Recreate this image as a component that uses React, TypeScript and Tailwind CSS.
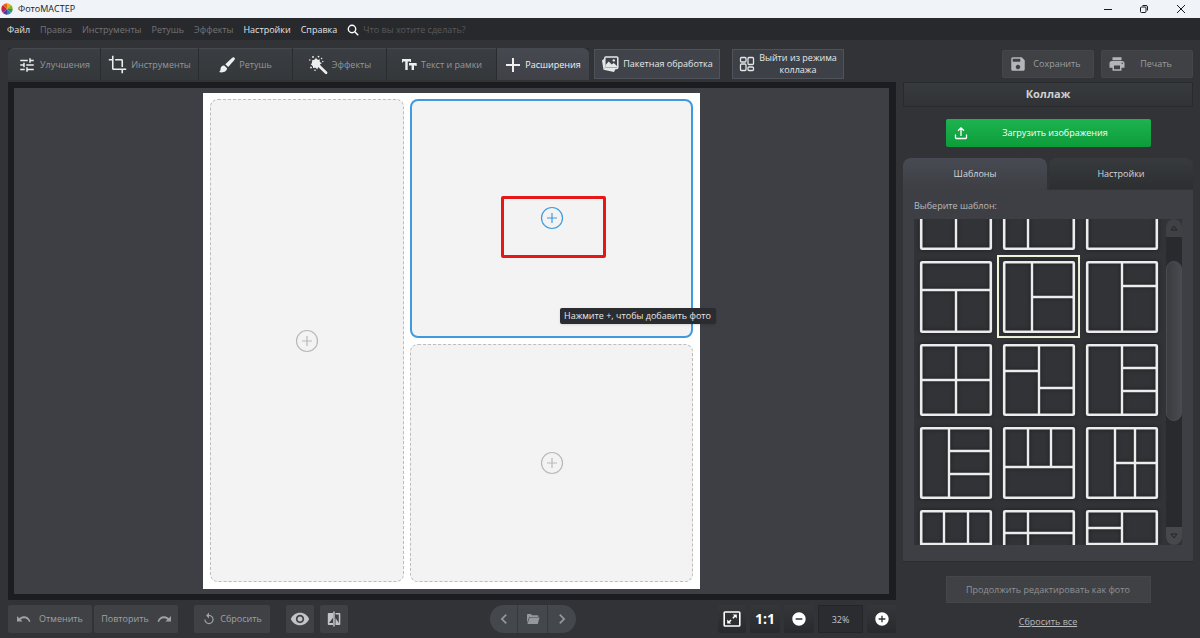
import { useState } from "react";
import type { ReactNode } from "react";
import clsx from "clsx";
import {
  MdTune,
  MdCrop,
  MdSave,
  MdPrint,
  MdReplay,
  MdRemoveRedEye,
  MdChevronLeft,
  MdChevronRight,
  MdAddCircle,
  MdRemoveCircle,
} from "react-icons/md";

// [x1, y1, x2, y2] dividers inside a 72x72 frame
type Line = [number, number, number, number];

interface Template {
  id: string;
  lines: Line[];
}

const TEMPLATES: Template[] = [
  { id: "2-columns", lines: [[36, 0, 36, 72]] },
  { id: "narrow-wide", lines: [[25, 0, 25, 72]] },
  { id: "single", lines: [] },
  { id: "top-2-bottom", lines: [[0, 29, 72, 29], [36, 29, 36, 72]] },
  { id: "left-2-right", lines: [[29, 0, 29, 72], [29, 36, 72, 36]] },
  { id: "left-2-right-short", lines: [[36, 0, 36, 72], [36, 25, 72, 25]] },
  { id: "4-grid", lines: [[36, 0, 36, 72], [0, 36, 72, 36]] },
  { id: "4-shifted", lines: [[36, 0, 36, 72], [0, 27, 36, 27], [36, 44, 72, 44]] },
  { id: "half-3-right", lines: [[36, 0, 36, 72], [36, 24, 72, 24], [36, 47, 72, 47]] },
  { id: "left-3-right", lines: [[29, 0, 29, 72], [29, 24, 72, 24], [29, 47, 72, 47]] },
  { id: "3-top-bottom", lines: [[0, 40, 72, 40], [25, 0, 25, 40], [48, 0, 48, 40]] },
  { id: "left-4-right", lines: [[29, 0, 29, 72], [49, 0, 49, 72], [29, 36, 72, 36]] },
  { id: "6-grid", lines: [[24, 0, 24, 72], [48, 0, 48, 72], [0, 34, 72, 34]] },
  { id: "5-mixed", lines: [[25, 0, 25, 72], [0, 23, 72, 23]] },
  { id: "5-steps", lines: [[36, 0, 36, 34], [0, 18, 36, 18], [0, 34, 72, 34]] },
];

const MENU = [
  { label: "Файл", enabled: true },
  { label: "Правка", enabled: false },
  { label: "Инструменты", enabled: false },
  { label: "Ретушь", enabled: false },
  { label: "Эффекты", enabled: false },
  { label: "Настройки", enabled: true },
  { label: "Справка", enabled: true },
];

const LOGO_COLORS = ["#e8b21c", "#7fb52c", "#2a9a52", "#2c7fc0", "#4b3f9b", "#a32b7c", "#d3222f", "#e8641e"];

function LogoIcon() {
  return (
    <svg className="size-3" viewBox="-10 -10 20 20">
      {LOGO_COLORS.map((color, i) => (
        <path key={color} d="M0 0L0 -9.5A9.5 9.5 0 0 1 6.72 -6.72Z" fill={color} transform={`rotate(${i * 45})`} />
      ))}
    </svg>
  );
}

function BrushIcon() {
  return (
    <svg className="size-4" viewBox="0 0 16 16" fill="currentColor">
      <path d="M13.200.7Q14.500-.2 15.500.8 16.400 1.900 15.400 3L9.200 10.100 6.300 7.300z" />
      <path d="M5.200 8.500l2.900 2.700c.1 2.800-3.800 5.300-8.100 3.900 1.700-.8 1.300-2.300 1.700-4.100.5-1.800 2-2.900 3.500-2.500z" />
    </svg>
  );
}

function WandIcon() {
  return (
    <svg className="size-5" viewBox="0 0 20 20" fill="currentColor">
      <circle cx="8" cy="8.500" r="4.300" />
      <path d="M8 2.600l1.300 2.600L12 4.200l-.8 2.800 2.800 1.100-2.300 1.500 1.400 2.500-2.900-.2L9.200 14.500 7.400 12.300 4.900 13.200 5.200 10.500 2.600 9.400l2.400-1.600L3.700 5.200l2.900.2z" />
      <path d="M9.500 9.500l8.600 8.300" stroke="currentColor" strokeWidth="2.600" strokeLinecap="round" />
      <g>
        <circle cx="5" cy="2" r=".9" />
        <circle cx="10.500" cy="1.600" r=".9" />
        <circle cx="13.600" cy="3.500" r=".8" />
        <circle cx="1.800" cy="5" r=".8" />
        <circle cx="3" cy="12.500" r=".9" />
        <circle cx="14.800" cy="6.500" r=".7" />
        <circle cx="7" cy="15.200" r=".8" />
      </g>
    </svg>
  );
}

function TextSizeIcon() {
  return (
    <svg className="size-4" viewBox="0 0 16 16" fill="none" stroke="currentColor" strokeWidth="2.400">
      <path d="M1 3.200h9M5.500 3.200V13M8 7.200h7.500M11.800 7.200V13" />
      <path d="M1.500 2.500v3M9.500 2.500v2.500M15 6.500v2.500" strokeWidth="1" />
    </svg>
  );
}

function PlusIcon() {
  return (
    <svg className="size-4" viewBox="0 0 16 16" stroke="currentColor" strokeWidth="2">
      <path d="M8 1v14M1 8h14" />
    </svg>
  );
}

function BatchIcon() {
  return (
    <svg className="size-[18px]" viewBox="0 0 18 18">
      <path d="M1 5.500L3.500 3.500V14H14.500l-1.500 3L2.500 14.800z" fill="currentColor" />
      <rect x="3.800" y="2" width="13" height="11.500" rx="1" fill="none" stroke="currentColor" strokeWidth="1.500" />
      <path d="M4.500 12.500V10l3.200-3.500 3 3 2-1.600 3.300 3v1.600z" fill="currentColor" />
      <circle cx="12.800" cy="5.400" r="1.200" fill="currentColor" />
    </svg>
  );
}

function CollageIcon() {
  return (
    <svg className="size-4" viewBox="0 0 16 16" fill="none" stroke="currentColor" strokeWidth="1.300">
      <rect x="1.500" y="1.500" width="5.500" height="4.500" rx="1" />
      <rect x="9" y="1.500" width="5.500" height="7" rx="1" />
      <rect x="1.500" y="8" width="5.500" height="6.500" rx="1" />
      <rect x="9" y="11" width="5.500" height="3.500" rx="1" />
    </svg>
  );
}

function UploadIcon() {
  return (
    <svg className="size-3.5" viewBox="0 0 14 14" fill="none" stroke="currentColor" strokeWidth="1.300">
      <path d="M1.500 8.500v3.200q0 .8.800.8h9.400q.8 0 .8-.8V8.500M7 10V2M4 4.800L7 1.800l3 3" />
    </svg>
  );
}

function UndoIcon({ flip }: { flip?: boolean }) {
  return (
    <svg className={clsx("w-3.5 h-2.5", flip && "-scale-x-100")} viewBox="0 0 14 10" fill="currentColor">
      <path d="M0 2v5.500h5.600L3.600 5.600C7 3.200 10.500 4.300 12 8l1.500-.5C11.800 2.200 6.500.8 2.200 4.200z" />
    </svg>
  );
}

function CompareIcon() {
  return (
    <svg className="size-4" viewBox="0 0 16 16" fill="currentColor">
      <path d="M2.500 2H7v12H2.500Q1.800 14 1.800 13.300V2.700Q1.800 2 2.500 2zM3 12h4V6.800z" fillRule="evenodd" />
      <path d="M7.200.5h1.500v15H7.200z" />
      <path d="M9.500 2h4q.8 0 .8.800v10.400q0 .8-.8.800h-4v-1.400h3.300V3.400H9.500z" />
      <path d="M9.500 7l3.300 5v1H9.500z" />
    </svg>
  );
}

function FolderIcon() {
  return (
    <svg className="w-3.5 h-3" viewBox="0 0 14 12" fill="currentColor">
      <path d="M1 10V1.800Q1 1 1.800 1h3l1.200 1.300h5.500q.8 0 .8.800V4H3.200z" />
      <path d="M3.600 4.600H13.500L11.800 11H1.400z" />
    </svg>
  );
}

function FitIcon() {
  return (
    <svg className="size-[18px]" viewBox="0 0 18 18" fill="none" stroke="currentColor">
      <rect x="1.200" y="2" width="15.600" height="14" rx=".8" strokeWidth="1.600" />
      <path d="M5.500 12.500l7-7" strokeWidth="1.500" strokeDasharray="3.600 2.500" />
      <path d="M9.800 4.600h4v4zM4.200 9.400v4h4z" fill="currentColor" stroke="none" />
    </svg>
  );
}

function SearchIcon() {
  return (
    <svg className="size-3" viewBox="0 0 12 12" fill="none" stroke="currentColor" strokeWidth="1.400">
      <circle cx="5" cy="5" r="3.700" />
      <path d="M7.800 7.800L11.200 11.200" />
    </svg>
  );
}

function AddCircle() {
  return (
    <svg className="size-6" viewBox="0 0 24 24" fill="none" stroke="currentColor">
      <circle cx="12" cy="12" r="10.500" strokeWidth="1.200" />
      <path d="M12 7v10M7 12h10" strokeWidth="1.200" />
    </svg>
  );
}

function TitleBar() {
  return (
    <header className="flex h-[18px] shrink-0 items-center bg-[#f0f3f8] pl-px text-[#1a1a1a]">
      <LogoIcon />
      <h1 className="ml-[5px] flex-1 text-[9px]">ФотоМАСТЕР</h1>
      <div className="flex h-full">
        <button aria-label="Свернуть" className="flex w-9 items-center justify-center">
          <svg className="size-2" viewBox="0 0 8 8" stroke="currentColor"><path d="M0 4.500h8" /></svg>
        </button>
        <button aria-label="Восстановить" className="flex w-9 items-center justify-center">
          <svg className="size-2.5" viewBox="0 0 10 10" fill="none" stroke="currentColor">
            <rect x="1.500" y="3" width="5.500" height="5.500" rx="1" />
            <path d="M3.500 1.500h3.500q1.500 0 1.500 1.500v3.500" />
          </svg>
        </button>
        <button aria-label="Закрыть" className="flex w-[38px] items-center justify-center">
          <svg className="size-2.5" viewBox="0 0 10 10" stroke="currentColor"><path d="M1 1l8 8M9 1L1 9" /></svg>
        </button>
      </div>
    </header>
  );
}

function MenuBar() {
  return (
    <nav className="flex h-[22px] shrink-0 items-center gap-2.5 bg-[#28292c] px-[7px] pt-0.5 text-[9px]">
      {MENU.map((item) => (
        <button key={item.label} disabled={!item.enabled} className={item.enabled ? "text-[#e2e2e3]" : "text-[#737477]"}>
          {item.label}
        </button>
      ))}
      <label className="flex flex-1 items-center gap-1 text-white">
        <SearchIcon />
        <input
          aria-label="Поиск"
          placeholder="Что вы хотите сделать?"
          className="w-40 bg-transparent outline-none placeholder:text-[#58595c]"
        />
      </label>
    </nav>
  );
}

interface ToolTabProps {
  icon: ReactNode;
  label: string;
  className: string;
  active?: boolean;
}

function ToolTab({ icon, label, className, active }: ToolTabProps) {
  return (
    <button
      className={clsx(
        "flex h-8 items-center justify-center gap-1 border-t border-[#45484d] bg-linear-to-b",
        active ? "from-[#464951] to-[#404147] text-[#f2f2f2]" : "from-[#3a3d41] to-[#35383b] text-[#94979b]",
        className,
      )}
    >
      <span className="text-[#eeeeef]">{icon}</span>
      {label}
    </button>
  );
}

function Toolbar() {
  return (
    <div className="flex h-[42px] shrink-0 items-start pt-2 text-[9px]">
      <div className="flex gap-px bg-[#2b2c2f]">
        <ToolTab className="w-[92px] rounded-tl-md" icon={<MdTune size={18} />} label="Улучшения" />
        <ToolTab className="w-[97px]" icon={<MdCrop size={19} />} label="Инструменты" />
        <ToolTab className="w-[93px]" icon={<BrushIcon />} label="Ретушь" />
        <ToolTab className="w-[93px]" icon={<WandIcon />} label="Эффекты" />
        <ToolTab className="w-[109px]" icon={<TextSizeIcon />} label="Текст и рамки" />
        <ToolTab className="w-[92px] rounded-tr-md" icon={<PlusIcon />} label="Расширения" active />
      </div>
      <button className="ml-[5px] mt-px flex h-[30px] w-[126px] items-center justify-center gap-1 border border-[#50535a] bg-[#40434a] text-[#e6e7e8]">
        <BatchIcon />
        Пакетная обработка
      </button>
      <button className="ml-3 mt-px flex h-[30px] w-[112px] items-center justify-center gap-1 border border-[#50535a] bg-[#3d4046] leading-3 text-[#e6e7e8]">
        <CollageIcon />
        <span>
          Выйти из режима
          <br />
          коллажа
        </span>
      </button>
    </div>
  );
}

function Canvas() {
  const empty =
    "flex items-center justify-center rounded-lg border border-dashed border-[#bdbdbd] bg-[#f3f3f3] text-[#b9b9b9]";
  return (
    <main className="flex min-h-0 flex-1 justify-center border-6 border-r-7 border-[#1c1d20] bg-[#3e3f44] py-[5px]">
      <div className="grid aspect-497/496 grid-cols-[194fr_283fr] grid-rows-2 gap-1.5 bg-white px-[7px] pb-[7px] pt-1.5">
        <button aria-label="Добавить фото 1" className={clsx(empty, "row-span-2")}>
          <AddCircle />
        </button>
        <div className="relative flex items-center justify-center rounded-lg border-2 border-[#3f9be0] bg-[#f3f3f3] text-[#3f9be0]">
          <button aria-label="Добавить фото 2">
            <AddCircle />
          </button>
          <div className="pointer-events-none absolute left-[89px] top-[95px] h-[62px] w-[105px] rounded-xs border-3 border-[#e81717]" />
          <div
            role="tooltip"
            className="absolute left-[148px] top-[207px] flex h-4 w-[156px] items-center whitespace-nowrap rounded-xs bg-[#2b2c2f] pl-1 text-[9px] text-[#e9e9e9] shadow"
          >
            Нажмите +, чтобы добавить фото
          </div>
        </div>
        <button aria-label="Добавить фото 3" className={empty}>
          <AddCircle />
        </button>
      </div>
    </main>
  );
}

function BottomBar() {
  const flat = "flex h-7 items-center justify-center rounded-xs bg-[#3f4145] text-[#9fa1a4]";
  const dark = "flex h-7 items-center justify-center rounded-xs bg-linear-to-b from-[#34363a] to-[#292a2d] text-white";
  return (
    <footer className="flex h-[38px] shrink-0 items-start justify-between pt-[5px] text-[9px]">
      <div className="flex">
        <button className={clsx(flat, "w-[84px] gap-2")}>
          <UndoIcon />
          Отменить
        </button>
        <button className={clsx(flat, "ml-0.5 w-[84px] gap-2")}>
          Повторить
          <UndoIcon flip />
        </button>
        <button className={clsx(flat, "ml-4 w-[76px] gap-1")}>
          <MdReplay size={14} />
          Сбросить
        </button>
        <button aria-label="Показать оригинал" className={clsx(flat, "ml-4 w-7 text-[#c3c4c6]")}>
          <MdRemoveRedEye size={20} />
        </button>
        <button aria-label="Сравнить" className={clsx(flat, "ml-1.5 w-7 text-[#c3c4c6]")}>
          <CompareIcon />
        </button>
      </div>

      <div className="flex h-7 divide-x divide-[#36383b] overflow-hidden rounded-full bg-[#44474c] text-[#96989b]">
        <button aria-label="Предыдущее фото" className="flex w-7 items-center justify-center">
          <MdChevronLeft size={20} />
        </button>
        <button aria-label="Открыть папку" className="flex w-[30px] items-center justify-center">
          <FolderIcon />
        </button>
        <button aria-label="Следующее фото" className="flex w-7 items-center justify-center">
          <MdChevronRight size={20} />
        </button>
      </div>

      <div className="flex gap-1">
        <button aria-label="По размеру окна" className={clsx(dark, "w-7")}>
          <FitIcon />
        </button>
        <button className={clsx(dark, "w-[30px] text-sm font-bold")}>1:1</button>
        <button aria-label="Уменьшить" className={clsx(dark, "w-[30px]")}>
          <MdRemoveCircle size={16} />
        </button>
        <input
          aria-label="Масштаб"
          defaultValue="32%"
          className="h-7 w-[45px] border border-[#242528] bg-[#2b2c2f] text-center text-[#c5c6c8]"
        />
        <button aria-label="Увеличить" className={clsx(dark, "w-[29px]")}>
          <MdAddCircle size={16} />
        </button>
      </div>
    </footer>
  );
}

interface TemplateThumbProps {
  template: Template;
  selected: boolean;
  onSelect: () => void;
}

function TemplateThumb({ template, selected, onSelect }: TemplateThumbProps) {
  return (
    <button
      aria-label={`Шаблон ${template.id}`}
      aria-pressed={selected}
      onClick={onSelect}
      className={clsx("flex size-[83px] items-center justify-center border-2", selected ? "border-[#f1f5dc]" : "border-transparent")}
    >
      <svg className="size-[74px] drop-shadow-[0_0_2px_#18191b]" viewBox="-1 -1 74 74" fill="none" stroke="#ececed">
        <rect x="1.200" y="1.200" width="69.600" height="69.600" rx="1" strokeWidth="2.600" />
        {template.lines.map(([x1, y1, x2, y2]) => (
          <path key={`${x1}-${y1}-${x2}-${y2}`} d={`M${x1} ${y1}L${x2} ${y2}`} strokeWidth="2.400" />
        ))}
      </svg>
    </button>
  );
}

function ScrollTrack() {
  return (
    <div className="flex w-4 shrink-0 flex-col rounded-full bg-[#292a2d]">
      <button aria-label="Вверх" className="flex h-[18px] items-center justify-center rounded-t-full bg-[#3f4145] text-[#222326]">
        <svg className="size-2" viewBox="0 0 8 8" fill="none" stroke="currentColor"><path d="M1 6h6L4 2z" /></svg>
      </button>
      <div className="flex-1 py-6">
        <div className="h-[66%] rounded-full border border-[#4a4c50] bg-linear-to-r from-[#3a3c40] to-[#474a4e]" />
      </div>
      <button aria-label="Вниз" className="flex h-[18px] items-center justify-center rounded-b-full bg-[#46484c] text-[#222326]">
        <svg className="size-2" viewBox="0 0 8 8" fill="none" stroke="currentColor"><path d="M1 2h6L4 6z" /></svg>
      </button>
    </div>
  );
}

function SidePanel() {
  const [selected, setSelected] = useState("left-2-right");
  const action = "flex h-7 w-[92px] items-center rounded-xs border border-[#44464a] bg-[#3f4145] px-1.5 text-[#9b9da0]";

  return (
    <aside className="flex w-[290px] shrink-0 flex-col text-[9px]">
      <div className="flex h-[42px] shrink-0 items-start justify-end gap-[7px] pt-2.5">
        <button className={action}>
          <MdSave size={18} className="text-[#b4b5b7]" />
          <span className="flex-1">Сохранить</span>
        </button>
        <button className={action}>
          <MdPrint size={18} className="text-[#b4b5b7]" />
          <span className="flex-1">Печать</span>
        </button>
      </div>

      <h2 className="flex h-[25px] shrink-0 items-center justify-center border border-[#292a2d] bg-linear-to-b from-[#383b3e] to-[#303235] text-[11px] font-bold text-[#cfd0d2]">
        Коллаж
      </h2>

      <button className="mx-auto mt-3 flex h-7 w-[205px] shrink-0 items-center rounded-xs bg-linear-to-b from-[#1db350] to-[#0b9d3a] px-2 text-white">
        <UploadIcon />
        <span className="flex-1">Загрузить изображения</span>
      </button>

      <div role="tablist" className="mt-[11px] flex h-8 shrink-0 gap-0.5">
        <button role="tab" aria-selected="true" className="flex-1 rounded-t-lg bg-linear-to-b from-[#484a53] to-[#3e3f44] text-[#d6d7d9]">
          Шаблоны
        </button>
        <button role="tab" aria-selected="false" className="mb-px flex-1 rounded-t-lg bg-linear-to-b from-[#383b3e] to-[#2c2e30] text-[#d6d7d9]">
          Настройки
        </button>
      </div>

      <div className="flex min-h-0 flex-1 flex-col border-b border-[#2b2c2f] bg-[#3e3f44] px-[11px] pb-4">
        <p className="flex h-[29px] shrink-0 items-center pt-0.5 text-[#b8b9bc]">Выберите шаблон:</p>
        <div className="flex min-h-0 flex-1 justify-between overflow-hidden bg-[#323337]">
          <div className="-mt-[47px] grid grid-cols-3 self-start">
            {TEMPLATES.map((t) => (
              <TemplateThumb key={t.id} template={t} selected={t.id === selected} onSelect={() => setSelected(t.id)} />
            ))}
          </div>
          <ScrollTrack />
        </div>
      </div>

      <div className="flex h-[76px] shrink-0 flex-col items-center pt-3.5">
        <button className="h-[27px] w-[205px] border border-[#44464a] bg-[#3f4145] text-[#909295]">
          Продолжить редактировать как фото
        </button>
        <a href="#reset" className="mt-3 text-[#b8b9bc] underline">
          Сбросить все
        </a>
      </div>
    </aside>
  );
}

export default function App() {
  return (
    <div className="flex h-screen flex-col overflow-hidden bg-[#323337] font-['Open_Sans','Noto_Sans',sans-serif]">
      <TitleBar />
      <MenuBar />
      <div className="flex min-h-0 flex-1 gap-[7px] pl-2 pr-[7px]">
        <div className="flex min-w-0 flex-1 flex-col">
          <Toolbar />
          <Canvas />
          <BottomBar />
        </div>
        <SidePanel />
      </div>
    </div>
  );
}
